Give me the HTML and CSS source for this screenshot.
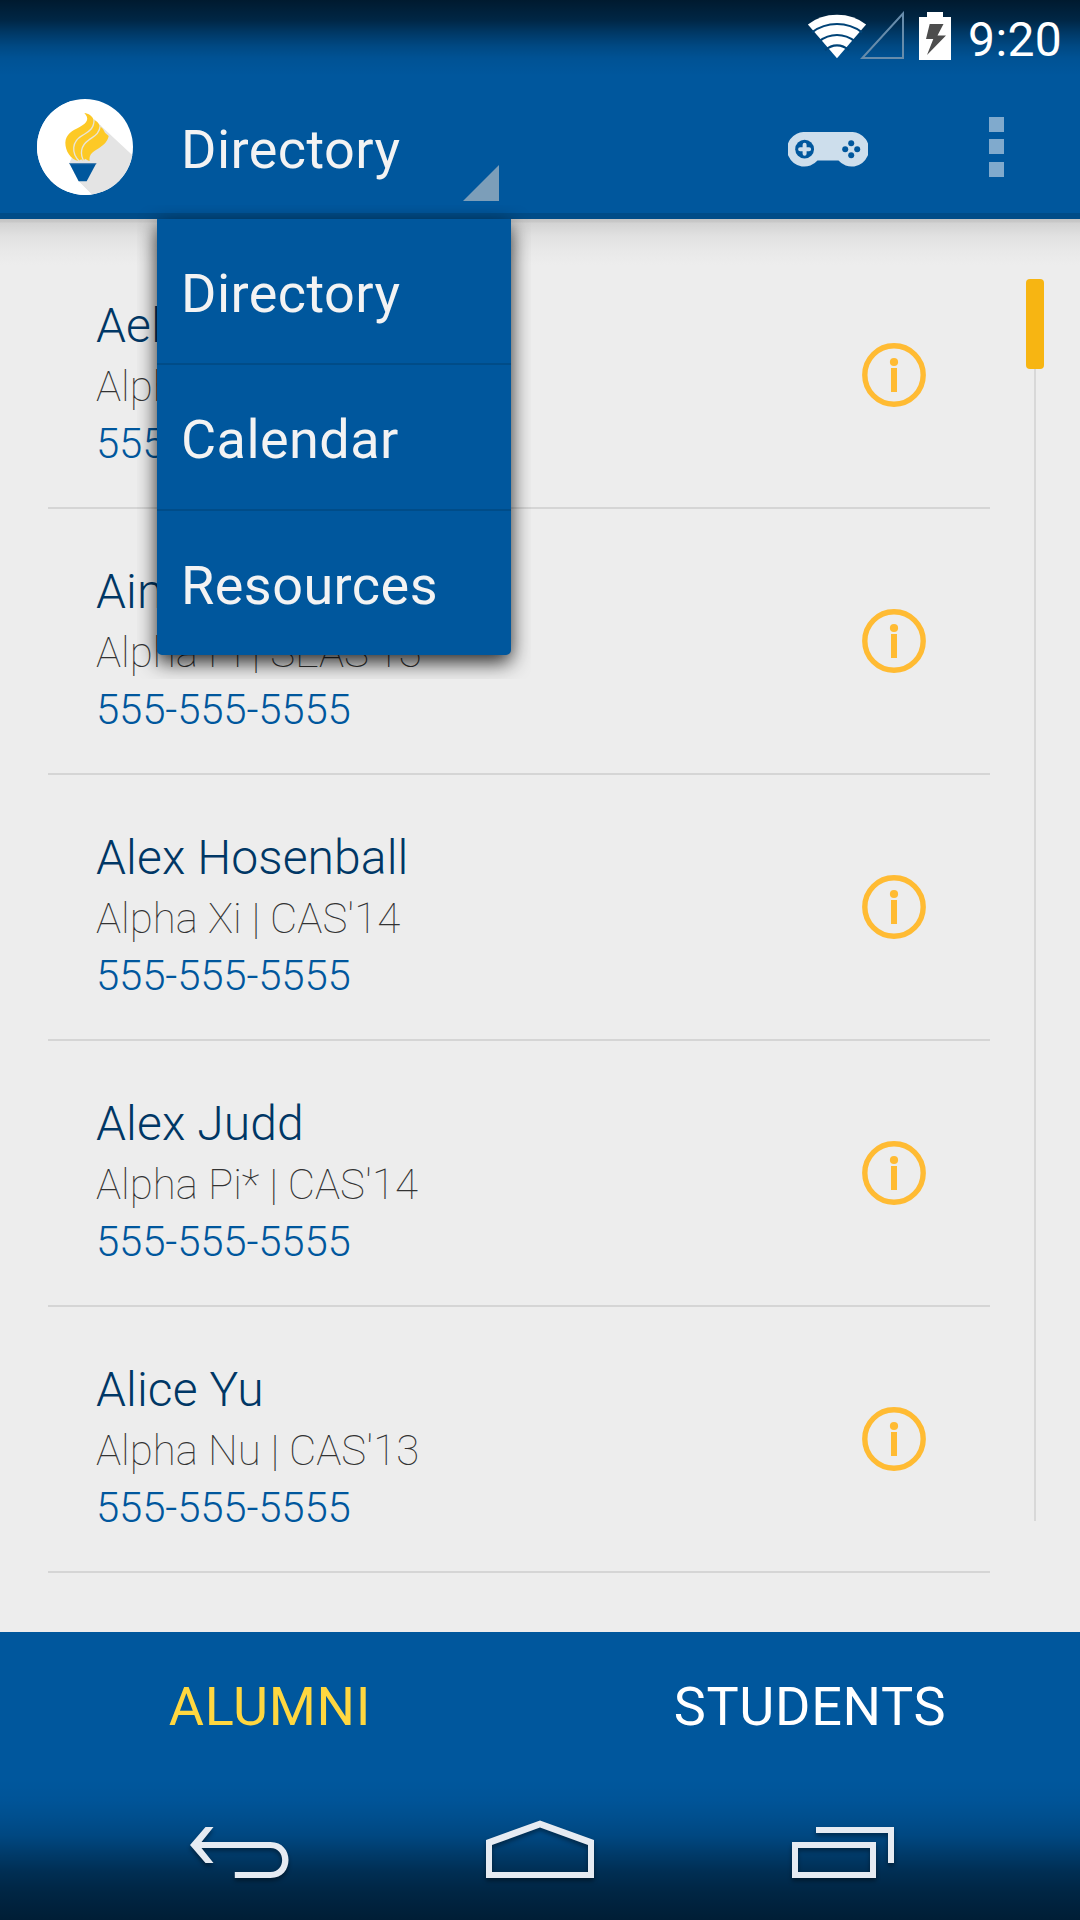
FILE: index.html
```html
<!DOCTYPE html>
<html lang="en">
<head>
<meta charset="utf-8">
<title>Directory</title>
<link rel="stylesheet" href="styles.css">
</head>
<body>
<svg class="defs" width="0" height="0">
  <symbol id="info" viewBox="0 0 64 64">
    <circle cx="32" cy="32" r="29.2" fill="none" stroke="#fb3" stroke-width="5.4"/>
    <circle cx="32" cy="19" r="4.1" fill="#fb3"/>
    <path d="M29 25h6v24h-6z" fill="#fb3"/>
  </symbol>
</svg>
<div class="screen">
  <header class="top">
    <div class="status">
      <svg class="wifi" width="60" height="46" viewBox="0 0 60 46">
        <path d="M30 44.3 L.9 10.5 Q13 .7 30 .7 T59.1 10.5z" fill="#fff"/>
        <path d="M5 18.3 Q16 10 30 10 T55 18.3 M12 27.4 Q20 21 30 21 T48 27.4 M18 36.2 Q23.500 31.300 30 31.300 T42 36.200" fill="none" stroke="#004377" stroke-width="2.200"/>
      </svg>
      <svg class="signal" width="44" height="48" viewBox="0 0 44 48">
        <path d="M2.300 47 H43 V2.500z" fill="none" stroke="#678cab" stroke-width="2"/>
      </svg>
      <svg class="battery" width="32" height="48" viewBox="0 0 32 48">
        <path d="M8 0h16v5h8v43H0V5h8z" fill="#fff"/>
        <path d="M10.700 12 H24.500 L18.500 23.600 H27 L8 43 L14.300 27 H7z" fill="#4d4d4d"/>
      </svg>
      <span class="clock">9:20</span>
    </div>
    <div class="actionbar">
      <svg class="logo" width="96" height="96" viewBox="52 57 288 288">
        <clipPath id="disc"><circle cx="196" cy="201" r="144"/></clipPath>
        <circle cx="196" cy="201" r="144" fill="#fff"/>
        <path clip-path="url(#disc)" d="M225 120 L345 232 V350 H222 L150 277 L149 250 L160 225z" fill="#e4e4e4"/>
        <path d="M52 57H150L194 99 137 190 149 250 177 304 218 345H52z" fill="#fff" clip-path="url(#disc)"/>
        <path d="M194 99 C207 100 217 108 222 119 Q235 124 240 137 Q252 146 256 158 L267 168 C264 186 247 200 230 209 C213 219 208 228 210 243 C203 240 199 238 196 236 L192 243 L184 238 L178 243 C152 238 137 212 137 188 C138 163 158 152 180 141 C205 128 209 115 194 99z" fill="#fdc926"/>
        <path d="M223 118 C224 149 205 155 187 167 C158 184 152 218 181 246 M242 136 C239 165 220 169 205 182 C184 197 179 222 194 246" fill="none" stroke="#e8e5d8" stroke-width="4"/>
        <path d="M149 250H230L201 304H177z" fill="#00579d"/>
        <path d="M149 251H230" stroke="#4f83b0" stroke-width="3"/>
      </svg>
      <div class="spinner">
        <span class="title">Directory</span>
        <svg class="corner" width="36" height="36" viewBox="0 0 36 36"><path d="M36 0V36H0z" fill="#7c9eb9"/></svg>
        <div class="menu">
          <div class="option">Directory</div>
          <div class="option">Calendar</div>
          <div class="option">Resources</div>
        </div>
      </div>
      <svg class="gamepad" width="80" height="35" viewBox="0 0 80 35">
        <path d="M17.300 0H62.700A17.300 17.300 0 1 1 50.500 28.500H29.500A17.300 17.300 0 1 1 17.300 0z" fill="#cddeec"/>
        <g fill="#00579d">
          <circle cx="16.600" cy="17.200" r="9.400"/>
          <circle cx="63.200" cy="11.200" r="3"/><circle cx="57.200" cy="17.200" r="3"/>
          <circle cx="69.200" cy="17.200" r="3"/><circle cx="63.200" cy="23.200" r="3"/>
        </g>
        <path d="M16.600 12.700v9M12.100 17.200h9" stroke="#cddeec" stroke-width="4" stroke-linecap="round"/>
      </svg>
      <svg class="overflow" width="15" height="60" viewBox="0 0 15 60"><path d="M0 0h15v15H0zM0 22h15v15H0zM0 45h15v15H0z" fill="#80aacd"/></svg>
    </div>
  </header>

  <main class="content">
    <div class="list">
      <div class="row"><div class="person"><div class="name">Ael</div><div class="detail">Alpha</div><div class="phone">555-555-5555</div></div><svg class="info"><use href="#info"/></svg></div>
      <div class="row"><div class="person"><div class="name">Ain</div><div class="detail">Alpha Pi | SEAS'13</div><div class="phone">555-555-5555</div></div><svg class="info"><use href="#info"/></svg></div>
      <div class="row"><div class="person"><div class="name">Alex Hosenball</div><div class="detail">Alpha Xi | CAS'14</div><div class="phone">555-555-5555</div></div><svg class="info"><use href="#info"/></svg></div>
      <div class="row"><div class="person"><div class="name">Alex Judd</div><div class="detail">Alpha Pi* | CAS'14</div><div class="phone">555-555-5555</div></div><svg class="info"><use href="#info"/></svg></div>
      <div class="row"><div class="person"><div class="name">Alice Yu</div><div class="detail">Alpha Nu | CAS'13</div><div class="phone">555-555-5555</div></div><svg class="info"><use href="#info"/></svg></div>
    </div>
    <div class="scrollbar"><div class="thumb"></div><div class="track"></div></div>
  </main>

  <footer class="bottom">
    <div class="tabs">
      <div class="tab active">ALUMNI</div>
      <div class="tab">STUDENTS</div>
    </div>
    <nav class="navbar">
      <svg width="100" height="58" viewBox="0 0 100 58"><path d="M15.500 7H23.500L11.500 22H80.500C104.500 22 104.500 58 80.500 58H44.800V52H80.500C96 52 96 28 80.500 28H11.500L23.500 43H15.500L0 25z"/></svg>
      <svg class="home" width="108" height="58" viewBox="0 0 108 58"><path fill-rule="evenodd" d="M0 20L54 .5L108 20V58H0zM6 25V52H102V25L54 7.500z"/></svg>
      <svg width="102" height="58" viewBox="0 0 102 58"><path fill-rule="evenodd" d="M0 22H84V58H0zM6 28V52H78V28zM24 7H102V43H96V13H24z"/></svg>
    </nav>
  </footer>
</div>
</body>
</html>
```
FILE: styles.css
```css
* { box-sizing: border-box; }
body { margin: 0; font-family: Roboto, "Liberation Sans", sans-serif; }
svg { display: block; flex: none; }
.defs { position: absolute; }
.screen {
  width: 1080px;
  height: 1920px;
  display: flex;
  flex-direction: column;
  background: #ededed;
  overflow: hidden;
}

/* Status bar and action bar */
.top {
  height: 219px;
  background:
    linear-gradient(rgba(0,0,0,.7) 0, rgba(0,0,0,.56) 20px, rgba(0,0,0,.35) 33px, rgba(0,0,0,.17) 46px, rgba(0,0,0,.06) 58px, transparent 76px),
    #00579d;
  border-bottom: 6px solid #004c88;
}
.status {
  height: 75px;
  display: flex;
  justify-content: flex-end;
  align-items: flex-start;
  padding: 11px 18px 0 0;
}
.wifi { margin: 3px -7px 0 0; }
.signal { margin-right: 15px; }
.battery { margin: 1px 17px 0 0; }
.clock { width: 94px; color: #fff; font-size: 48px; line-height: 58px; letter-spacing: .4px; white-space: nowrap; }
.actionbar {
  height: 138px;
  display: flex;
  align-items: flex-start;
  padding: 24px 76px 0 37px;
}
.spinner {
  position: relative;
  width: 354px;
  height: 120px;
  margin: 0 277px 0 24px;
  padding: 0 12px 0 24px;
  display: flex;
  justify-content: space-between;
  color: #f3f3f3;
  font-size: 54px;
  letter-spacing: .45px;
}
.title { line-height: 101px; }
.corner { margin-top: 66px; }
.gamepad { margin: 33px 121px 0 0; }
.overflow { margin-top: 18px; }
.menu {
  position: absolute;
  left: 0;
  top: 120px;
  width: 354px;
  height: 436px;
  z-index: 2;
  background: #00579d;
  border-radius: 0 0 5px 5px;
  box-shadow: 0 7px 20px rgba(0,0,0,.85);
  clip-path: inset(-14px -20px -24px -20px);
}
.option { height: 146px; padding-left: 24px; line-height: 150px; border-bottom: 2px solid #004c88; }
.option:last-child { border-bottom: 0; }

/* Directory list */
.content {
  height: 1413px;
  display: flex;
  background: linear-gradient(#c4c4c4 0, #c8c8c8 3px, #d3d3d3 4px, #e1e1e1 17px, #e8e8e8 30px, #ededed 46px);
}
.list { width: 942px; margin: 24px 36px 0 48px; }
.row {
  height: 266px;
  padding: 0 64px 0 48px;
  display: flex;
  justify-content: space-between;
  border-bottom: 2px solid #d5d5d5;
}
.person { padding-top: 55px; white-space: nowrap; }
.name { height: 64px; font-size: 48px; line-height: 56px; letter-spacing: .1px; font-weight: 300; color: #003765; }
.detail { height: 57px; font-size: 42px; line-height: 49px; font-weight: 100; color: #333; }
.phone { font-size: 42px; line-height: 49px; letter-spacing: -.2px; font-weight: 300; color: #00579d; }
.info { width: 64px; height: 64px; margin-top: 100px; }
.scrollbar { width: 18px; padding-top: 60px; }
.thumb { height: 90px; border-radius: 4px; background: #f7b512; }
.track { width: 2px; height: 1152px; margin: 0 auto; background: #d8d8d8; }

/* Tabs and navigation bar */
.bottom {
  height: 288px;
  background:
    linear-gradient(transparent 146px, rgba(0,0,0,.035) 168px, rgba(0,0,0,.09) 184px, rgba(0,0,0,.18) 204px, rgba(0,0,0,.33) 222px, rgba(0,0,0,.47) 240px, rgba(0,0,0,.57) 260px, rgba(0,0,0,.66) 288px),
    #00579d;
}
.tabs { height: 144px; display: flex; }
.tab { flex: 1; text-align: center; font-size: 54px; line-height: 150px; letter-spacing: .7px; color: #fff; }
.active { color: #ffd740; }
.navbar {
  height: 144px;
  display: flex;
  justify-content: space-between;
  padding: 44px 186px 0 190px;
  fill: #e6ebf2;
}
.navbar svg { overflow: visible; filter: drop-shadow(0 3px 2px rgba(0,0,0,.4)); }
.navbar .home { margin-right: 2px; }
```
